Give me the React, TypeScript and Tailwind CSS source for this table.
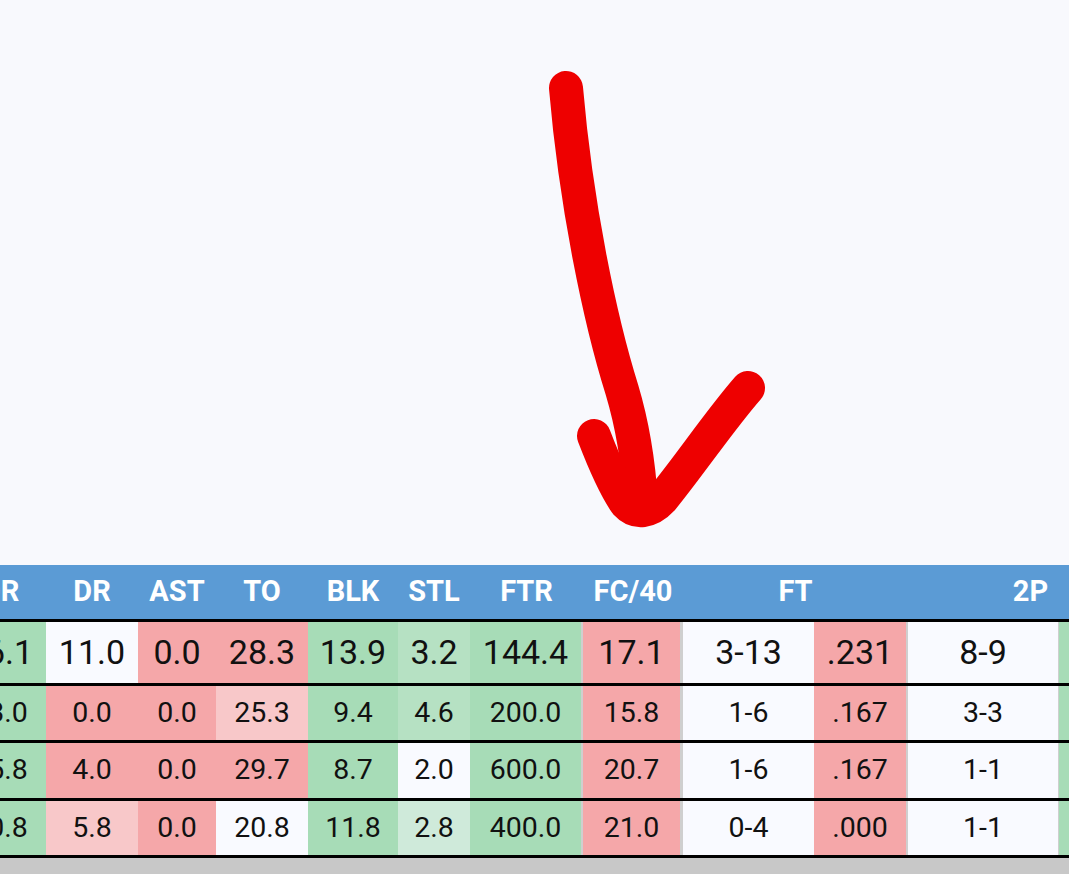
const G = "bg-[#a7dcb7]";
const g1 = "bg-[#b6e1c3]";
const g2 = "bg-[#cfeada]";
const P = "bg-[#f5a7a9]";
const p = "bg-[#f8c8c9]";
const W = "bg-[#f9faff]";

const cols = [
  { w: "w-[92px]", label: "OR" },
  { w: "w-[92px]", label: "DR" },
  { w: "w-[78px]", label: "AST" },
  { w: "w-[92px]", label: "TO" },
  { w: "w-[90px]", label: "BLK" },
  { w: "w-[72px]", label: "STL" },
  { w: "w-[113px] border-r-2 border-[#cfcfcf]", label: "FTR" },
  { w: "w-[100px] border-r-[3px] border-[#cfcfcf]", label: "FC/40" },
  { w: "w-[131px]" },
  { w: "w-[94px] border-r-2 border-[#cfcfcf]" },
  { w: "w-[151px] border-r border-[#cfcfcf]" },
  { w: "w-[94px]" },
];

const headers = [
  { w: "w-[92px]", label: "OR" },
  { w: "w-[92px]", label: "DR" },
  { w: "w-[78px]", label: "AST" },
  { w: "w-[92px]", label: "TO" },
  { w: "w-[90px]", label: "BLK" },
  { w: "w-[72px]", label: "STL" },
  { w: "w-[113px]", label: "FTR" },
  { w: "w-[100px]", label: "FC/40" },
  { w: "w-[225px]", label: "FT" },
  { w: "w-[245px]", label: "2P" },
];

type Row = { h: string; size: string; cells: [string, string][] };

// heights include the 3px black top rule
const rows: Row[] = [
  {
    h: "h-[64px]",
    size: "text-[34px]",
    cells: [
      ["16.1", G], ["11.0", W], ["0.0", P], ["28.3", P], ["13.9", G], ["3.2", g1],
      ["144.4", G], ["17.1", P], ["3-13", W], [".231", P], ["8-9", W], [".889", G],
    ],
  },
  {
    h: "h-[57px]",
    size: "text-[28.5px]",
    cells: [
      ["13.0", G], ["0.0", P], ["0.0", P], ["25.3", p], ["9.4", G], ["4.6", g1],
      ["200.0", G], ["15.8", P], ["1-6", W], [".167", P], ["3-3", W], ["1.000", G],
    ],
  },
  {
    h: "h-[58px]",
    size: "text-[28.5px]",
    cells: [
      ["15.8", G], ["4.0", P], ["0.0", P], ["29.7", P], ["8.7", G], ["2.0", W],
      ["600.0", G], ["20.7", P], ["1-6", W], [".167", P], ["1-1", W], ["1.000", G],
    ],
  },
  {
    h: "h-[57px]",
    size: "text-[28.5px]",
    cells: [
      ["10.8", G], ["5.8", p], ["0.0", P], ["20.8", W], ["11.8", G], ["2.8", g2],
      ["400.0", G], ["21.0", P], ["0-4", W], [".000", P], ["1-1", W], ["1.000", G],
    ],
  },
];

function Arrow() {
  return (
    <svg width="1069" height="565" viewBox="0 0 1069 565" className="block shrink-0">
      <g fill="none" stroke="#ee0000" strokeWidth="34" strokeLinecap="round" strokeLinejoin="round">
        <path d="M566 88 C576 205 600 320 622 390 C634 430 639 470 641 502" />
        <path d="M594 436 C604 462 614 486 626 503 C636 514 650 512 662 499 C692 462 720 420 748 388" />
      </g>
    </svg>
  );
}

export default function App() {
  return (
    <div className="w-full h-[874px] bg-[#f8f9fd] flex flex-col overflow-hidden font-['Roboto',sans-serif]">
      <Arrow />
      <div className="overflow-hidden shrink-0">
        <div className="w-[1199px] -ml-[46px]">
          <div className="flex h-[54px] bg-[#5b9bd5]">
            {headers.map((c) => (
              <div
                key={c.label}
                className={`${c.w} shrink-0 flex items-center justify-center text-white font-bold text-[29px]`}
              >
                {c.label}
              </div>
            ))}
          </div>
          {rows.map((r, i) => (
            <div key={i} className={`flex border-t-[3px] border-black ${r.h}`}>
              {r.cells.map(([v, bg], j) => (
                <div
                  key={j}
                  className={`${cols[j].w} ${bg} shrink-0 flex items-center justify-center text-[#111] ${r.size}`}
                >
                  {v}
                </div>
              ))}
            </div>
          ))}
          <div className="h-[3px] bg-black" />
        </div>
      </div>
      <div className="flex-1 bg-[#c8c8c8]" />
    </div>
  );
}
